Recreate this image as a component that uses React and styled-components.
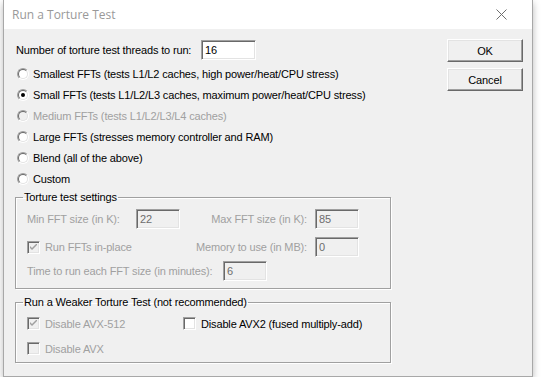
import styled, { createGlobalStyle } from "styled-components";

const GlobalStyle = createGlobalStyle`
  html, body {
    margin: 0;
    padding: 0;
    background: #ffffff;
  }
  body {
    font-family: "Liberation Sans", Arial, sans-serif;
    font-size: 11px;
    letter-spacing: -0.15px;
    color: #000000;
  }
`;

const Window = styled.div`
  margin-left: 3px;
  width: 530px;
  height: 377px;
  box-sizing: border-box;
  border: 1px solid #a8a8a8;
  border-top: none;
  background: #f0f0f0;
  box-shadow: 0 3px 7px rgba(0, 0, 0, 0.28);
  display: flex;
  flex-direction: column;
`;

const TitleBar = styled.div`
  height: 29px;
  flex: none;
  background: #ffffff;
  display: flex;
  align-items: center;
  justify-content: space-between;
  padding: 0 25px 0 8px;
`;

const Title = styled.span`
  font-family: "Open Sans", "Noto Sans", sans-serif;
  font-size: 12px;
  letter-spacing: 0;
  color: #999999;
  padding-bottom: 1px;
`;

const Body = styled.div`
  flex: 1;
  display: flex;
  justify-content: space-between;
  padding: 10px 9px 0 11px;
`;

const LeftCol = styled.div`
  display: flex;
  flex-direction: column;
  width: 376px;
  padding-top: 1px;
`;

const RightCol = styled.div`
  display: flex;
  flex-direction: column;
  gap: 6px;
`;

const Button = styled.button`
  width: 76px;
  height: 23px;
  box-sizing: border-box;
  padding: 0;
  font-family: "Liberation Sans", Arial, sans-serif;
  font-size: 11px;
  letter-spacing: -0.15px;
  color: #000;
  background: #f0f0f0;
  border: 1px solid;
  border-color: #ffffff #696969 #696969 #ffffff;
  box-shadow: inset -1px -1px #a0a0a0, inset 1px 1px #e3e3e3;
`;

const Row = styled.div`
  display: flex;
  align-items: center;
  height: ${(p) => p.$h || 20}px;
  margin-top: ${(p) => p.$mt || 0}px;
`;

const Label = styled.span`
  color: ${(p) => (p.$disabled ? "#a0a0a0" : "#000000")};
  width: ${(p) => (p.$w ? `${p.$w}px` : "auto")};
  text-align: ${(p) => (p.$right ? "right" : "left")};
  padding-left: ${(p) => p.$pl || 0}px;
  padding-right: ${(p) => p.$pr || 0}px;
  box-sizing: border-box;
  white-space: nowrap;
  flex: none;
`;

const TextBox = styled.div`
  width: ${(p) => p.$w || 44}px;
  height: 20px;
  box-sizing: border-box;
  flex: none;
  border: 1px solid;
  border-color: #a0a0a0 #ffffff #ffffff #a0a0a0;
  box-shadow: inset 1px 1px #696969, inset -1px -1px #e3e3e3;
  background: ${(p) => (p.$disabled ? "#f0f0f0" : "#ffffff")};
  color: ${(p) => (p.$disabled ? "#6d6d6d" : "#000000")};
  padding: 2px 0 0 3px;
  line-height: 14px;
`;

const RadioList = styled.div`
  display: flex;
  flex-direction: column;
  margin-top: 3px;
`;

const RadioRow = styled.div`
  display: flex;
  align-items: center;
  height: 21px;
  gap: 4px;
  padding-left: 2px;
`;

const RadioCircle = styled.span`
  position: relative;
  width: 12px;
  height: 12px;
  box-sizing: border-box;
  flex: none;
  border-radius: 50%;
  border: 1px solid;
  border-color: #a0a0a0 #ffffff #ffffff #a0a0a0;

  &::before {
    content: "";
    position: absolute;
    inset: 0;
    border-radius: 50%;
    border: 1px solid;
    border-color: #696969 #e3e3e3 #e3e3e3 #696969;
    background: ${(p) => (p.$disabled ? "#f0f0f0" : "#ffffff")};
  }

  &::after {
    content: "";
    display: ${(p) => (p.$checked ? "block" : "none")};
    position: absolute;
    left: 3px;
    top: 3px;
    width: 4px;
    height: 4px;
    border-radius: 50%;
    background: #000000;
  }
`;

const Group = styled.fieldset`
  margin: ${(p) => p.$mt || 0}px 0 0 0;
  padding: 0 0 ${(p) => p.$pb || 0}px 11px;
  border: 1px solid #a0a0a0;
  box-shadow: inset 1px 1px #ffffff, 1px 1px #ffffff;
  min-width: 0;
`;

const Legend = styled.legend`
  margin-left: -4px;
  padding: 0 1px 0 1px;
  line-height: 13px;
  color: #000;
`;

const CheckRow = styled.div`
  display: flex;
  align-items: center;
  gap: 5px;
  width: ${(p) => (p.$w ? `${p.$w}px` : "auto")};
  flex: none;
`;

const CheckBox = styled.span`
  width: 13px;
  height: 13px;
  box-sizing: border-box;
  flex: none;
  display: flex;
  align-items: center;
  justify-content: center;
  border: 1px solid;
  border-color: #a0a0a0 #ffffff #ffffff #a0a0a0;
  box-shadow: inset 1px 1px #696969, inset -1px -1px #e3e3e3;
  background: ${(p) => (p.$disabled ? "#f0f0f0" : "#ffffff")};
`;

const CloseIcon = () => (
  <svg width="11" height="11" viewBox="0 0 11 11">
    <path d="M0.5 0.5 L10.5 10.5 M10.5 0.5 L0.5 10.5" stroke="#6e6e6e" strokeWidth="1" fill="none" />
  </svg>
);

const Check = ({ checked, disabled, label, w }) => (
  <CheckRow $w={w}>
    <CheckBox $disabled={disabled}>
      {checked && (
        <svg width="7" height="7" viewBox="0 0 7 7">
          <path d="M0 2 L0 4 L2 6 L7 1 L7 -1 L2 4 Z" fill={disabled ? "#a0a0a0" : "#000"} />
        </svg>
      )}
    </CheckBox>
    <Label $disabled={disabled}>{label}</Label>
  </CheckRow>
);

const radios = [
  { label: "Smallest FFTs (tests L1/L2 caches, high power/heat/CPU stress)" },
  { label: "Small FFTs (tests L1/L2/L3 caches, maximum power/heat/CPU stress)", checked: true },
  { label: "Medium FFTs (tests L1/L2/L3/L4 caches)", disabled: true },
  { label: "Large FFTs (stresses memory controller and RAM)" },
  { label: "Blend (all of the above)" },
  { label: "Custom" },
];

export default function App() {
  return (
    <>
      <GlobalStyle />
      <Window>
        <TitleBar>
          <Title>Run a Torture Test</Title>
          <CloseIcon />
        </TitleBar>
        <Body>
          <LeftCol>
            <Row>
              <Label $w={186} $pl={1}>Number of torture test threads to run:</Label>
              <TextBox $w={55}>16</TextBox>
            </Row>
            <RadioList>
              {radios.map((r) => (
                <RadioRow key={r.label}>
                  <RadioCircle $checked={r.checked} $disabled={r.disabled} />
                  <Label $disabled={r.disabled}>{r.label}</Label>
                </RadioRow>
              ))}
            </RadioList>
            <Group $mt={2} $pb={7}>
              <Legend>Torture test settings</Legend>
              <Row $mt={5}>
                <Label $disabled $w={109}>Min FFT size (in K):</Label>
                <TextBox $disabled>22</TextBox>
                <Label $disabled $right $w={135} $pr={8}>Max FFT size (in K):</Label>
                <TextBox $disabled>85</TextBox>
              </Row>
              <Row $mt={8}>
                <Check checked disabled label="Run FFTs in-place" w={153} />
                <Label $disabled $right $w={135} $pr={8}>Memory to use (in MB):</Label>
                <TextBox $disabled>0</TextBox>
              </Row>
              <Row $mt={4}>
                <Label $disabled $w={196} $pl={0}>Time to run each FFT size (in minutes):</Label>
                <TextBox $disabled>6</TextBox>
              </Row>
            </Group>
            <Group $mt={7} $pb={3}>
              <Legend>Run a Weaker Torture Test (not recommended)</Legend>
              <Row $h={21} $mt={4}>
                <Check checked disabled label="Disable AVX-512" w={156} />
                <Check label="Disable AVX2 (fused multiply-add)" />
              </Row>
              <Row $h={21} $mt={4}>
                <Check disabled label="Disable AVX" />
              </Row>
            </Group>
          </LeftCol>
          <RightCol>
            <Button>OK</Button>
            <Button>Cancel</Button>
          </RightCol>
        </Body>
      </Window>
    </>
  );
}
